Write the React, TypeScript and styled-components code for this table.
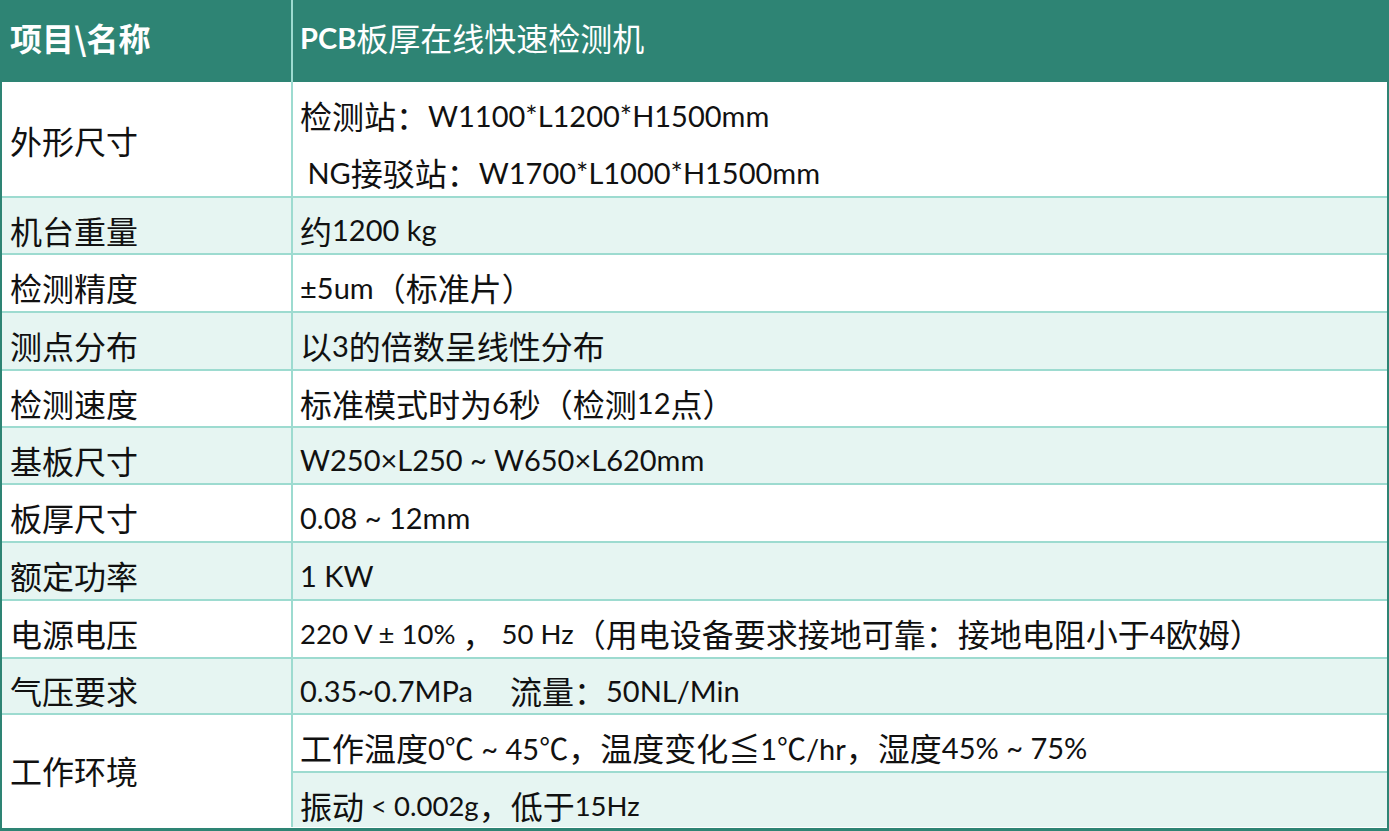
import React from "react";
import styled, { createGlobalStyle } from "styled-components";

const Global = createGlobalStyle`
  html, body { margin: 0; padding: 0; background: #ffffff; }
  body { font-family: "Noto Sans CJK SC", "Noto Sans", sans-serif; }
  *, *::before, *::after { box-sizing: border-box; }
`;

const GREEN = "#2e8474";
const LINE = "#9ddbd0";
const TINT = "#e6f5f2";

const Sheet = styled.div`
  width: 1389px;
  height: 831px;
  border: 2px solid ${GREEN};
  border-top: none;
  border-bottom-width: 3px;
  display: flex;
  flex-direction: column;
  background: #ffffff;
  color: #111111;
  font-size: 32px;
  overflow: hidden;
`;

const HeaderRow = styled.div`
  flex: none;
  height: 82px;
  display: grid;
  grid-template-columns: 291px 1fr;
  background: ${GREEN};
  color: #ffffff;
  margin: 0 -2px;
  padding: 0 2px;
`;

const HeaderCell = styled.div<{ $first?: boolean }>`
  display: flex;
  align-items: center;
  padding: 0 0 8px ${(p) => (p.$first ? "8px" : "7px")};
  border-right: ${(p) => (p.$first ? `2px solid ${LINE}` : "none")};
  font-weight: ${(p) => (p.$first ? 700 : 400)};
  white-space: nowrap;
`;

const Row = styled.div<{ $h: number; $tone: "white" | "tint" }>`
  flex: none;
  height: ${(p) => p.$h}px;
  display: grid;
  grid-template-columns: 291px 1fr;
  background: ${(p) => (p.$tone === "tint" ? TINT : "#ffffff")};
  border-bottom: 2px solid ${LINE};
  &:last-child {
    border-bottom: none;
  }
`;

const Label = styled.div<{ $shift: number }>`
  display: flex;
  align-items: center;
  padding-left: 8px;
  padding-top: ${(p) => Math.max(0, p.$shift * 2)}px;
  padding-bottom: ${(p) => Math.max(0, -p.$shift * 2)}px;
  border-right: 2px solid ${LINE};
  white-space: nowrap;
`;

const Value = styled.div`
  display: flex;
  flex-direction: column;
  min-width: 0;
`;

const Line = styled.div<{ $h: number; $tone?: "white" | "tint"; $sep?: boolean; $shift: number }>`
  height: ${(p) => p.$h}px;
  flex: none;
  display: flex;
  align-items: center;
  padding: ${(p) => p.$shift * 2}px 0 0 7px;
  white-space: pre;
  background: ${(p) => (p.$tone === "tint" ? TINT : "transparent")};
  border-bottom: ${(p) => (p.$sep ? `2px solid ${LINE}` : "none")};
`;

const Latin = styled.span<{ $bold?: boolean; $size: number }>`
  font-family: "Lato", "Noto Sans CJK SC", sans-serif;
  font-size: ${(p) => p.$size}px;
  font-weight: ${(p) => (p.$bold ? 700 : 400)};
`;

const LATIN_CHARS = "\\u0020-\\u007e\\u00a0\\u00b1\\u00d7\\u2103";
const LATIN_SPLIT = new RegExp(`([${LATIN_CHARS}]+)`);
const LATIN_ONLY = new RegExp(`^[${LATIN_CHARS}]+$`);

function Mixed({ text, bold, size = 29 }: { text: string; bold?: boolean; size?: number }) {
  const parts = text.split(LATIN_SPLIT).filter((s) => s.length > 0);
  return (
    <>
      {parts.map((part, i) =>
        LATIN_ONLY.test(part) ? (
          <Latin key={i} $bold={bold} $size={size}>
            {part}
          </Latin>
        ) : (
          <React.Fragment key={i}>{part}</React.Fragment>
        )
      )}
    </>
  );
}

type LineSpec = {
  text: string;
  h: number;
  tone?: "white" | "tint";
  sep?: boolean;
  shift?: number;
  size?: number;
};
type RowSpec = {
  label: string;
  h: number;
  tone: "white" | "tint";
  shift: number;
  lines: LineSpec[];
};

const rows: RowSpec[] = [
  {
    label: "外形尺寸",
    h: 116,
    tone: "white",
    shift: 1,
    lines: [
      { text: "检测站：W1100*L1200*H1500mm", h: 58 },
      { text: " NG接驳站：W1700*L1000*H1500mm", h: 56 },
    ],
  },
  { label: "机台重量", h: 57, tone: "tint", shift: 4, lines: [{ text: "约1200 kg", h: 55 }] },
  { label: "检测精度", h: 58, tone: "white", shift: 4, lines: [{ text: "±5um（标准片）", h: 56 }] },
  { label: "测点分布", h: 58, tone: "tint", shift: 4, lines: [{ text: "以3的倍数呈线性分布", h: 56 }] },
  { label: "检测速度", h: 57, tone: "white", shift: 4, lines: [{ text: "标准模式时为6秒（检测12点）", h: 55 }] },
  { label: "基板尺寸", h: 57, tone: "tint", shift: 4, lines: [{ text: "W250×L250 ~ W650×L620mm", h: 55 }] },
  { label: "板厚尺寸", h: 58, tone: "white", shift: 4, lines: [{ text: "0.08 ~ 12mm", h: 56 }] },
  { label: "额定功率", h: 58, tone: "tint", shift: 4, lines: [{ text: "1 KW", h: 56 }] },
  {
    label: "电源电压",
    h: 58,
    tone: "white",
    shift: 4,
    lines: [
      { text: "220 V ± 10% ， 50 Hz（用电设备要求接地可靠：接地电阻小于4欧姆）", h: 56, size: 27.5 },
    ],
  },
  {
    label: "气压要求",
    h: 56,
    tone: "tint",
    shift: 4,
    lines: [{ text: "0.35~0.7MPa     流量：50NL/Min", h: 54 }],
  },
  {
    label: "工作环境",
    h: 112,
    tone: "white",
    shift: -1,
    lines: [
      { text: "工作温度0℃ ~ 45℃，温度变化≦1℃/hr，湿度45% ~ 75%", h: 58, sep: true },
      { text: "振动 < 0.002g，低于15Hz", h: 54, tone: "tint", shift: 5, size: 27.5 },
    ],
  },
];

export default function App() {
  return (
    <>
      <Global />
      <Sheet>
        <HeaderRow>
          <HeaderCell $first>项目\名称</HeaderCell>
          <HeaderCell>
            <Mixed text="PCB" bold />
            板厚在线快速检测机
          </HeaderCell>
        </HeaderRow>
        {rows.map((r) => (
          <Row key={r.label} $h={r.h} $tone={r.tone}>
            <Label $shift={r.shift}>{r.label}</Label>
            <Value>
              {r.lines.map((l, i) => (
                <Line key={i} $h={l.h} $tone={l.tone} $sep={l.sep} $shift={l.shift ?? 4}>
                  <Mixed text={l.text} size={l.size} />
                </Line>
              ))}
            </Value>
          </Row>
        ))}
      </Sheet>
    </>
  );
}
